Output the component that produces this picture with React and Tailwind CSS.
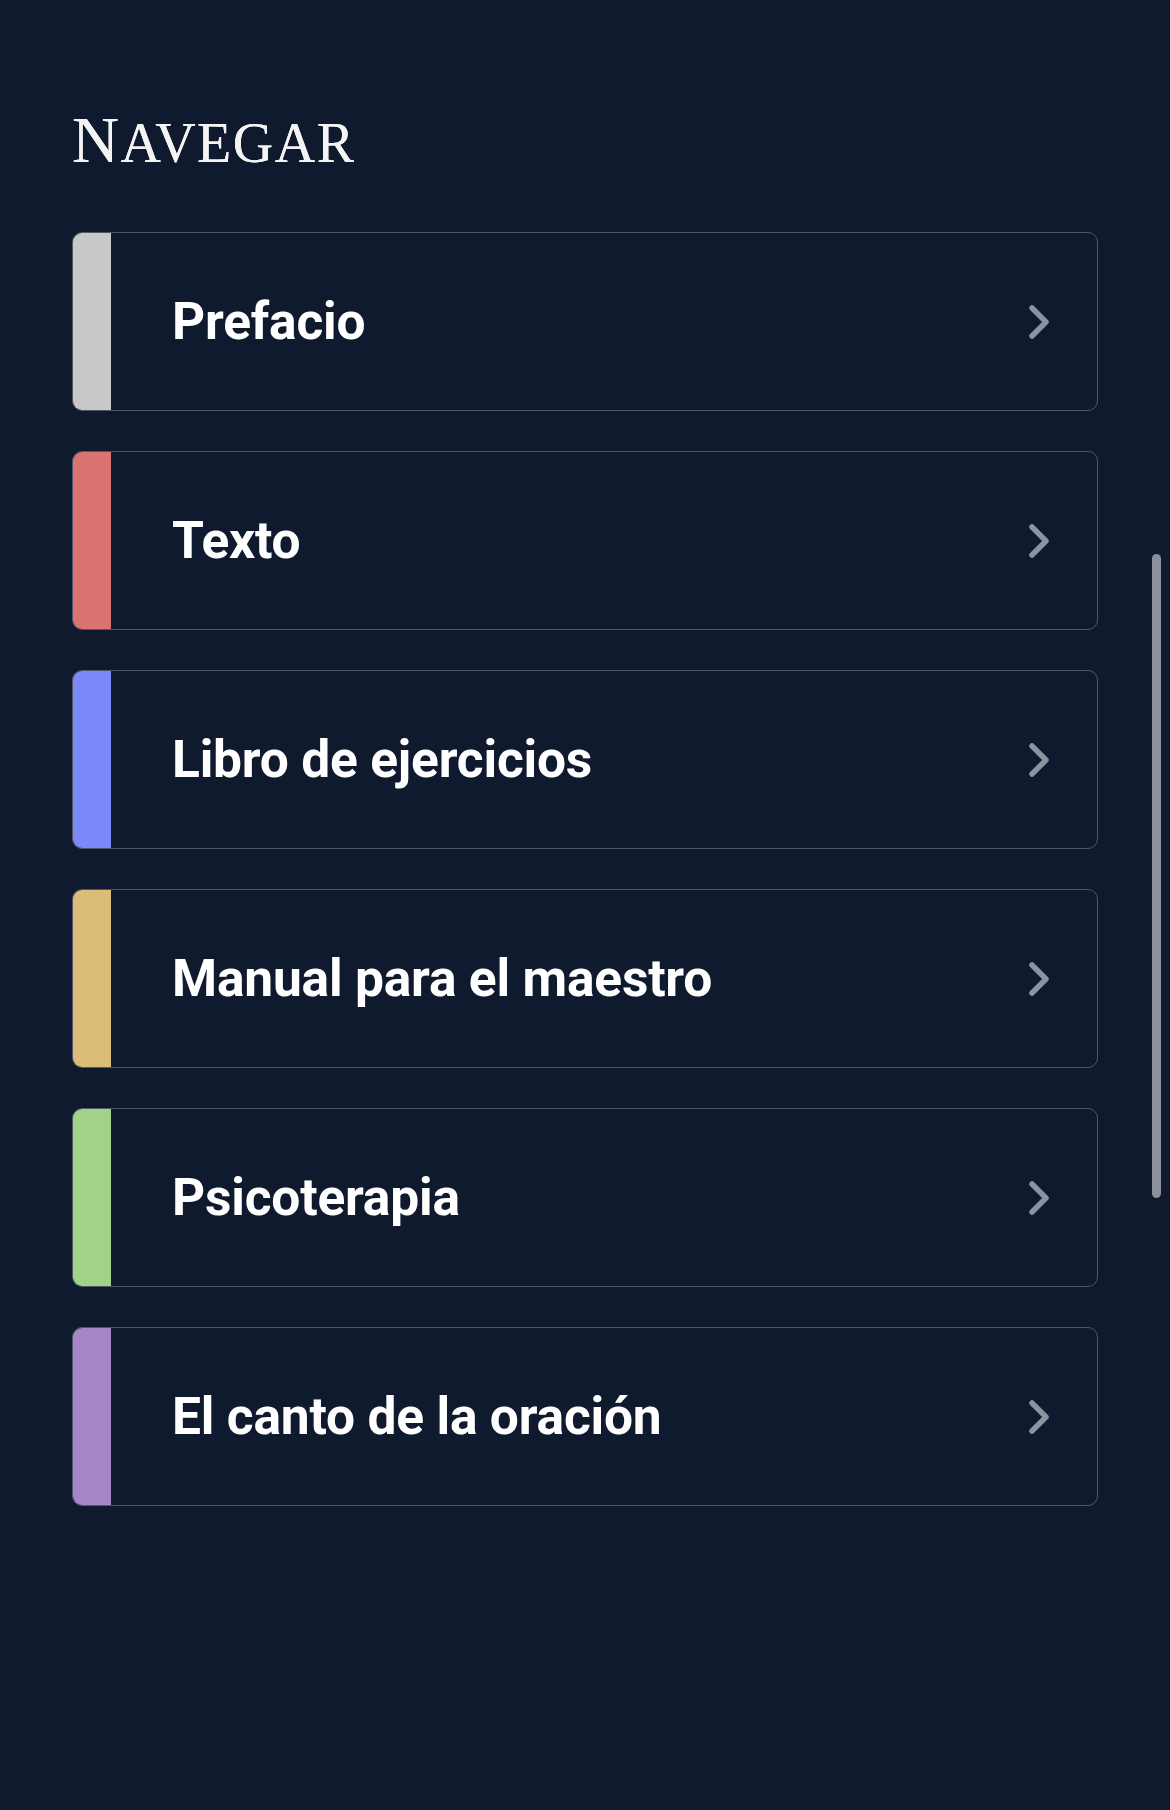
const sections = [
  { title: "Prefacio", bar: "bg-[#c9c7c9]" },
  { title: "Texto", bar: "bg-[#db7471]" },
  { title: "Libro de ejercicios", bar: "bg-[#7c89fb]" },
  { title: "Manual para el maestro", bar: "bg-[#dcbd77]" },
  { title: "Psicoterapia", bar: "bg-[#a0d388]" },
  { title: "El canto de la oración", bar: "bg-[#a686c8]" },
];

function Chevron() {
  return (
    <svg width="22" height="36" viewBox="0 0 22 36" fill="none" className="shrink-0">
      <polyline
        points="4,4 18,18 4,32"
        stroke="#8b92a0"
        strokeWidth="5.5"
        strokeLinecap="round"
        strokeLinejoin="round"
      />
    </svg>
  );
}

function SectionCard({ title, bar }) {
  return (
    <div className="flex h-[179px] w-full overflow-hidden rounded-[10px] border border-[#4f5869] bg-[#0f1a2f]">
      <div className={`w-[38px] shrink-0 ${bar}`} />
      <div className="flex flex-1 items-center justify-between pl-[61px] pr-[47px]">
        <span className="font-['Roboto',sans-serif] text-[51.5px] font-bold leading-none tracking-[-0.2px] text-white">
          {title}
        </span>
        <Chevron />
      </div>
    </div>
  );
}

export default function App() {
  return (
    <div className="relative min-h-[1810px] w-full bg-[#0f1a2f] px-[72px] pt-[108px]">
      <h1 className="font-['Liberation_Serif',serif] font-normal leading-none tracking-[1.5px] text-[#f4f4f4] [text-shadow:0_0_0.6px_#f4f4f4]">
        <span className="text-[65px]">N</span>
        <span className="text-[56px]">AVEGAR</span>
      </h1>

      <div className="mt-[59px] flex w-[1026px] flex-col gap-[40px]">
        {sections.map((s) => (
          <SectionCard key={s.title} {...s} />
        ))}
      </div>

      {/* scrollbar thumb */}
      <div className="absolute left-[1152px] top-[554px] h-[644px] w-[9px] rounded-full bg-[#8a909c]" />
    </div>
  );
}
